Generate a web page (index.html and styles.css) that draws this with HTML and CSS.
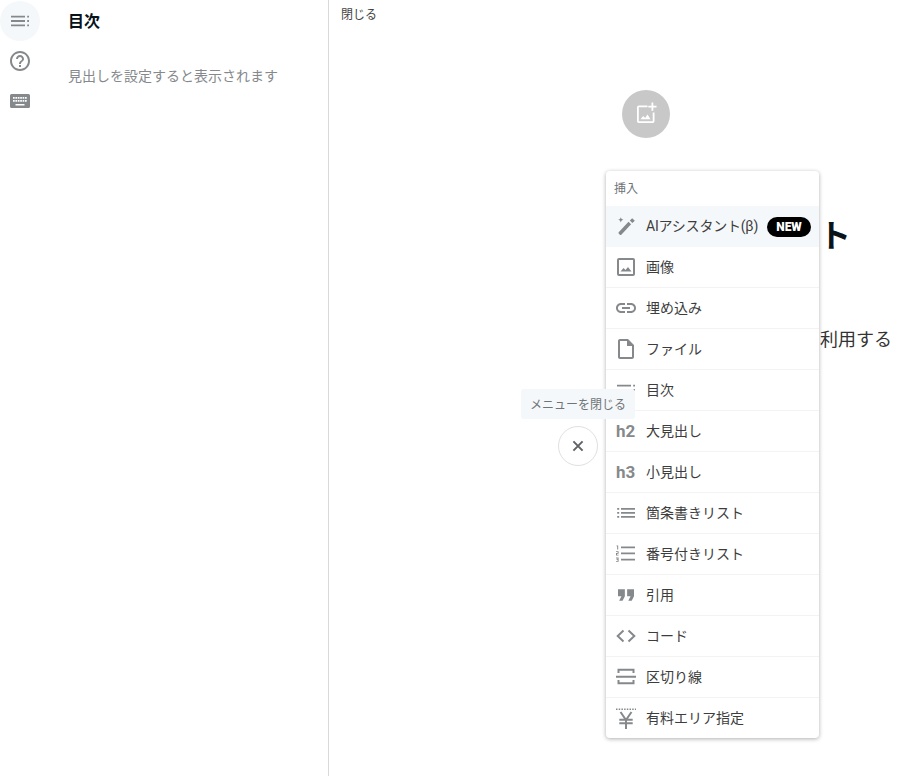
FILE: index.html
```html
<!DOCTYPE html>
<html lang="ja">
<head>
<meta charset="utf-8">
<title>目次</title>
<link rel="stylesheet" href="styles.css">
</head>
<body>
<div class="page">
  <aside class="side">
    <nav class="rail">
      <button class="rail-btn active" aria-label="目次">
        <svg class="icon" viewBox="0 0 24 24"><path d="M3 6.800h14v1.800H3zM3 11.100h14v1.800H3zM3 15.400h14v1.800H3zM19.200 6.800h1.800v1.800h-1.800zM19.200 11.100h1.800v1.800h-1.800zM19.200 15.400h1.800v1.800h-1.800z"/></svg>
      </button>
      <button class="rail-btn" aria-label="ヘルプ">
        <svg class="icon" viewBox="0 0 24 24"><path d="M11 18h2v-2h-2v2zm1-16C6.480 2 2 6.480 2 12s4.480 10 10 10 10-4.480 10-10S17.520 2 12 2zm0 18c-4.410 0-8-3.590-8-8s3.590-8 8-8 8 3.590 8 8-3.590 8-8 8zm0-14c-2.210 0-4 1.790-4 4h2c0-1.100.9-2 2-2s2 .9 2 2c0 2-3 1.750-3 5h2c0-2.250 3-2.500 3-5 0-2.210-1.790-4-4-4z"/></svg>
      </button>
      <button class="rail-btn" aria-label="キーボード">
        <svg class="icon" viewBox="0 0 24 24"><path fill-rule="evenodd" d="M3.500 5h17A1.500 1.500 0 0 1 22 6.500v11a1.500 1.500 0 0 1-1.500 1.500h-17A1.500 1.500 0 0 1 2 17.500v-11A1.500 1.500 0 0 1 3.500 5zM5 8v1.700h1.700V8zM7.400 8v1.700h1.700V8zM9.800 8v1.700h1.700V8zM12.200 8v1.700h1.700V8zM14.600 8v1.700h1.700V8zM17 8v1.700h1.700V8zM5 11v1.700h1.700V11zM7.400 11v1.700h1.700V11zM9.800 11v1.700h1.700V11zM12.200 11v1.700h1.700V11zM14.600 11v1.700h1.700V11zM17 11v1.700h1.700V11zM7.500 15v1.600h9V15z"/></svg>
      </button>
    </nav>
    <div class="toc">
      <h2 class="toc-title">目次</h2>
      <p class="toc-empty">見出しを設定すると表示されます</p>
    </div>
  </aside>

  <main class="main">
    <button class="close-link">閉じる</button>
    <div class="editor">
      <button class="add-image" aria-label="画像を追加">
        <svg viewBox="0 0 24 24" class="add-image-icon"><path d="M13.500 3.500v1.800H4.800v13.900h13.900v-8.700h1.800V19.200a1.800 1.800 0 0 1-1.800 1.800H4.800A1.800 1.800 0 0 1 3 19.200V5.300a1.800 1.800 0 0 1 1.800-1.800zM19.300.5v3.200h3.200v1.800h-3.200v3.200h-1.800V5.500h-3.200V3.700h3.200V.5zM6.500 17.200l2.700-3.200 1.900 2.100 2.400-3.600 3 4.700z"/></svg>
      </button>
      <h1 class="title">ト</h1>
      <p class="body-text">利用する</p>
    </div>
  </main>
</div>

<div class="tooltip">メニューを閉じる</div>
<button class="menu-close" aria-label="閉じる">
  <svg viewBox="0 0 24 24" class="menu-close-icon"><path d="M6.500 6.500l11 11M17.500 6.500l-11 11"/></svg>
</button>

<section class="menu">
  <header class="menu-head">挿入</header>
  <ul class="menu-list">
    <li class="item highlight">
      <svg class="icon" viewBox="0 0 24 24"><path d="M14.500 6.700l2.600 2.600L7.300 19.800c-.4.400-1 .4-1.400 0l-1.200-1.200c-.4-.4-.4-1 0-1.400zM15.800 5.500l2.400-2.300 2.600 2.600-2.400 2.300zM6.800 2.200l.8 1.800 1.800.8-1.800.8-.8 1.800-.8-1.800-1.800-.8 1.800-.8z"/></svg>
      <span class="label">AIアシスタント(β)</span>
      <span class="badge">NEW</span>
    </li>
    <li class="item">
      <svg class="icon" viewBox="0 0 24 24"><path fill-rule="evenodd" d="M5 3h14a2 2 0 0 1 2 2v14a2 2 0 0 1-2 2H5a2 2 0 0 1-2-2V5a2 2 0 0 1 2-2zm0 2v14h14V5zM6.500 16.500l3-3.500 2 2 2.500-3 3.500 4.500z"/></svg>
      <span class="label">画像</span>
    </li>
    <li class="item">
      <svg class="icon" viewBox="0 0 24 24"><path d="M3.900 12c0-1.710 1.390-3.100 3.100-3.100h4V7H7c-2.760 0-5 2.240-5 5s2.240 5 5 5h4v-1.900H7c-1.710 0-3.100-1.390-3.100-3.100zM8 13h8v-2H8v2zm9-6h-4v1.900h4c1.710 0 3.100 1.390 3.100 3.100s-1.390 3.100-3.100 3.100h-4V17h4c2.760 0 5-2.240 5-5s-2.240-5-5-5z"/></svg>
      <span class="label">埋め込み</span>
    </li>
    <li class="item">
      <svg class="icon" viewBox="0 0 24 24"><path d="M14 2H6c-1.100 0-1.990.9-1.990 2L4 20c0 1.100.89 2 1.990 2H18c1.100 0 2-.9 2-2V8l-6-6zM6 20V4h7v5h5v11H6z"/></svg>
      <span class="label">ファイル</span>
    </li>
    <li class="item">
      <svg class="icon" viewBox="0 0 24 24"><path d="M3 6.800h14v1.800H3zM3 11.100h14v1.800H3zM3 15.400h14v1.800H3zM19.200 6.800h1.800v1.800h-1.800zM19.200 11.100h1.800v1.800h-1.800zM19.200 15.400h1.800v1.800h-1.800z"/></svg>
      <span class="label">目次</span>
    </li>
    <li class="item">
      <span class="icon-text">h2</span>
      <span class="label">大見出し</span>
    </li>
    <li class="item">
      <span class="icon-text">h3</span>
      <span class="label">小見出し</span>
    </li>
    <li class="item">
      <svg class="icon" viewBox="0 0 24 24"><path d="M3.200 7h2v1.800h-2zM7 7h14v1.800H7zM3.200 11h2v1.800h-2zM7 11h14v1.800H7zM3.200 15h2v1.800h-2zM7 15h14v1.800H7z"/></svg>
      <span class="label">箇条書きリスト</span>
    </li>
    <li class="item">
      <svg class="icon" viewBox="0 0 24 24"><path d="M7 4.400h14v1.800H7zM7 10.400h14v1.800H7zM7 16.700h14v1.800H7zM2.500 3.400h1.700v4h-1v-3.200h-.7zM2 9.300h2.600v2.400H3v1h1.600v.8H2v-2.500h1.600v-.9H2zM2 15.600h2.600v4.200H2V19h1.600v-.9H2.500v-.8h1.100v-.9H2z"/></svg>
      <span class="label">番号付きリスト</span>
    </li>
    <li class="item">
      <svg class="icon" viewBox="1.500 1.500 21 21"><path d="M6 17h3l2-4V7H5v6h3zm8 0h3l2-4V7h-6v6h3z"/></svg>
      <span class="label">引用</span>
    </li>
    <li class="item">
      <svg class="icon stroke" viewBox="0 0 24 24"><path d="M9.500 6.500L3.700 12l5.800 5.500M14.500 6.500l5.800 5.500-5.800 5.500"/></svg>
      <span class="label">コード</span>
    </li>
    <li class="item">
      <svg class="icon stroke" viewBox="0 0 24 24"><path d="M4.500 8V4.700H19.500V8M2 11.700H22M4.500 15V18.300H19.500V15"/></svg>
      <span class="label">区切り線</span>
    </li>
    <li class="item">
      <svg class="icon stroke" viewBox="0 0 24 24"><path class="dots" d="M2 2.200H22"/><path d="M6.500 5L12 13L17.500 5M5.300 12.800H18.700M5.300 16.300H18.700M12 13V22"/></svg>
      <span class="label">有料エリア指定</span>
    </li>
  </ul>
</section>
</body>
</html>
```
FILE: styles.css
```css
* { box-sizing: border-box; }
html, body { margin: 0; padding: 0; }
body {
  height: 776px;
  overflow: hidden;
  position: relative;
  background: #fff;
  color: #08131a;
  font-family: "Noto Sans CJK JP", "Noto Sans", Roboto, sans-serif;
}
button {
  font: inherit;
  color: inherit;
  background: none;
  border: 0;
  padding: 0;
  cursor: pointer;
}
ul { list-style: none; margin: 0; padding: 0; }

.page { display: flex; height: 776px; }

.side {
  flex: 0 0 329px;
  display: flex;
  border-right: 1px solid #d9d9d9;
}
.rail {
  flex: 0 0 40px;
  display: flex;
  flex-direction: column;
  padding-top: 1px;
}
.rail-btn {
  width: 40px;
  height: 40px;
  border-radius: 50%;
  display: flex;
  align-items: center;
  justify-content: center;
}
.rail-btn.active { background: #f5f8fa; }
.icon { width: 24px; height: 24px; fill: #85898c; flex: none; }
.icon.stroke { fill: none; stroke: #85898c; stroke-width: 2; }
.dots { stroke-width: 1.500; stroke-dasharray: 1.500 1.200; }

.toc { padding: 8px 0 0 28px; flex: 1; }
.toc-title {
  margin: 0;
  font-size: 16px;
  line-height: 24px;
  font-weight: 700;
}
.toc-empty {
  margin: 31px 0 0;
  font-size: 14px;
  line-height: 24px;
  color: #85898c;
}

.main { flex: 1; min-width: 0; }
.close-link {
  display: block;
  margin: 5px 0 0 12px;
  font-size: 12px;
  line-height: 18px;
  color: #444;
}
.editor { padding-top: 67px; }
.add-image {
  display: flex;
  align-items: center;
  justify-content: center;
  width: 48px;
  height: 48px;
  margin-left: 293px;
  border-radius: 50%;
  background: #c8c8c8;
}
.add-image-icon { width: 24px; height: 24px; fill: #fff; }
.title {
  width: 522px;
  margin: 71px 0 0;
  text-align: right;
  font-size: 32px;
  line-height: 48px;
  font-weight: 700;
  color: #08131a;
}
.body-text {
  width: 563px;
  margin: 65px 0 0;
  text-align: right;
  font-size: 18px;
  line-height: 32px;
  color: #333;
}

.tooltip {
  position: absolute;
  left: 521px;
  top: 389px;
  z-index: 3;
  width: 114px;
  height: 30px;
  border-radius: 3px;
  background: #f5f8fa;
  color: #6f7478;
  font-size: 12px;
  line-height: 30px;
  text-align: center;
}
.menu-close {
  position: absolute;
  left: 558px;
  top: 426px;
  width: 40px;
  height: 40px;
  border: 1px solid #e0e0e0;
  border-radius: 50%;
  background: #fff;
  display: flex;
  align-items: center;
  justify-content: center;
}
.menu-close-icon {
  width: 20px;
  height: 20px;
  fill: none;
  stroke: #5f6468;
  stroke-width: 2.400;
}

.menu {
  position: absolute;
  left: 606px;
  top: 171px;
  z-index: 2;
  width: 213px;
  height: 567px;
  border-radius: 4px;
  background: #fff;
  box-shadow: 0 1px 4px rgba(0, 0, 0, .32);
  overflow: hidden;
}
.menu-head {
  height: 35px;
  padding: 9px 0 0 8px;
  font-size: 12px;
  line-height: 16px;
  color: #6f7478;
}
.item {
  display: flex;
  align-items: center;
  height: 41px;
  padding: 0 8px;
  border-bottom: 1px solid #f3f3f3;
}
.item:last-child { border-bottom: 0; }
.item.highlight { background: #f5f8fa; border-bottom: 0; }
.label {
  margin-left: 8px;
  font-family: Roboto, "Noto Sans CJK JP", sans-serif;
  font-size: 14px;
  line-height: 20px;
  color: #3d3d3d;
  white-space: nowrap;
}
.item:last-child .label { padding-bottom: 2px; }
.highlight .label { padding-bottom: 2px; letter-spacing: -.2px; }
.icon-text {
  width: 24px;
  padding-left: 2px;
  font-family: Roboto, sans-serif;
  font-size: 17px;
  font-weight: 700;
  line-height: 20px;
  color: #85898c;
}
.badge {
  margin-left: auto;
  width: 44px;
  height: 20px;
  border-radius: 10px;
  background: #000;
  color: #fff;
  font-family: Roboto, sans-serif;
  font-size: 12px;
  font-weight: 900;
  line-height: 20px;
  text-align: center;
}
```
